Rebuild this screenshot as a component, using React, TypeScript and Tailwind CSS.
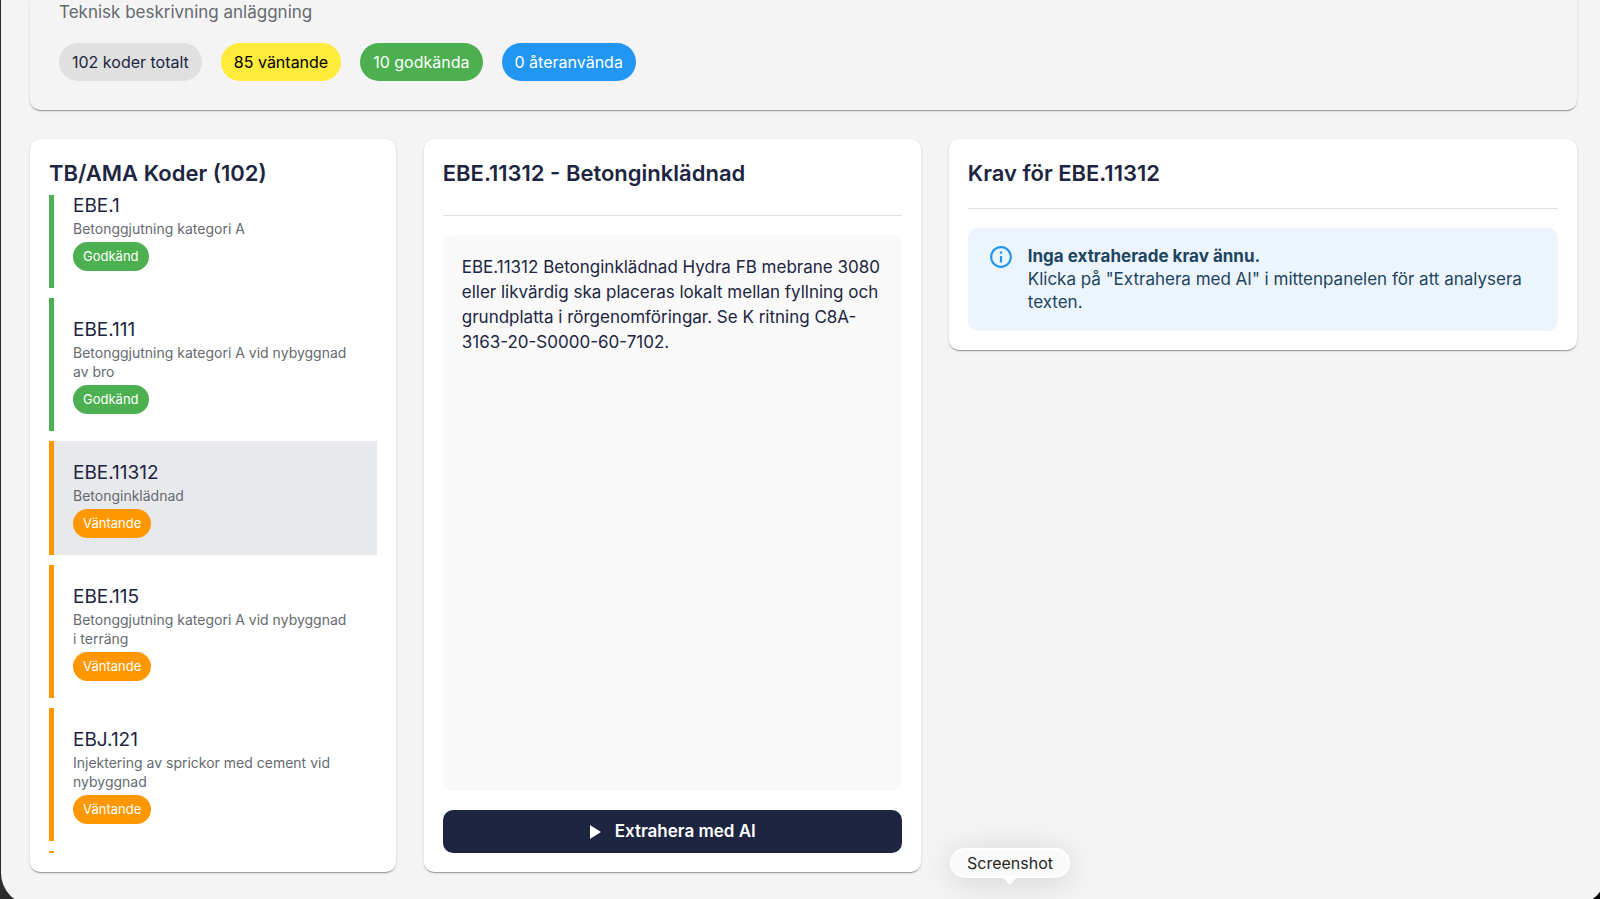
import { useLayoutEffect, useRef, useState } from 'react'
import clsx from 'clsx'

type Status = 'approved' | 'pending'

type Code = {
  id: string
  title: string
  status: Status
}

const CODES: Code[] = [
  { id: 'EBE.1', title: 'Betonggjutning kategori A', status: 'approved' },
  { id: 'EBE.111', title: 'Betonggjutning kategori A vid nybyggnad av bro', status: 'approved' },
  { id: 'EBE.11312', title: 'Betonginklädnad', status: 'pending' },
  { id: 'EBE.115', title: 'Betonggjutning kategori A vid nybyggnad i terräng', status: 'pending' },
  { id: 'EBJ.121', title: 'Injektering av sprickor med cement vid nybyggnad', status: 'pending' },
]

const STATS = [
  { label: '102 koder totalt', style: 'bg-[#e0e0e0] text-[#1d2541]' },
  { label: '85 väntande', style: 'bg-[#ffeb3b] text-black' },
  { label: '10 godkända', style: 'bg-[#4caf50] text-white' },
  { label: '0 återanvända', style: 'bg-[#2196f3] text-white' },
]

const STATUS = {
  approved: { label: 'Godkänd', border: 'border-[#4caf50]', badge: 'bg-[#4caf50]' },
  pending: { label: 'Väntande', border: 'border-[#ff9800]', badge: 'bg-[#ff9800]' },
}

const paper =
  'shadow-[0_2px_1px_-1px_rgba(0,0,0,0.2),0_1px_1px_0_rgba(0,0,0,0.14),0_1px_3px_0_rgba(0,0,0,0.12)]'

const heading = 'shrink-0 text-[22px] leading-[30px] font-semibold'

function Header() {
  return (
    <header className={clsx('rounded-b-[10px] px-[29px] pb-[29px]', paper)}>
      <p className="text-[17px] leading-[25px] text-[#666a70]">Teknisk beskrivning anläggning</p>
      <ul className="mt-[18px] flex flex-wrap gap-[19px]">
        {STATS.map((s) => (
          <li key={s.label} className={clsx('rounded-full px-[13px] text-base leading-[38px]', s.style)}>
            {s.label}
          </li>
        ))}
      </ul>
    </header>
  )
}

function CodeList({ selected, onSelect }: { selected: string; onSelect: (id: string) => void }) {
  const list = useRef<HTMLUListElement>(null)

  useLayoutEffect(() => {
    if (list.current) list.current.scrollTop = 21
  }, [])

  return (
    <section className={clsx('col-span-3 flex h-[calc(100vh-166px)] flex-col rounded-[10px] bg-white p-[19px]', paper)}>
      <h2 className={heading}>TB/AMA Koder (102)</h2>
      <ul ref={list} className="mt-[7px] flex min-h-0 flex-1 flex-col gap-[10px] overflow-y-auto [scrollbar-width:none]">
        {CODES.map((c) => (
          <li key={c.id} className="shrink-0">
            <button
              type="button"
              onClick={() => onSelect(c.id)}
              className={clsx(
                'block w-full border-l-[5px] pt-[21px] pr-7 pb-[17px] pl-[19px] text-left',
                STATUS[c.status].border,
                c.id === selected && 'bg-[#e8e9ed]'
              )}
            >
              <span className="mb-[2px] block text-[19px] leading-[22px]">{c.id}</span>
              <span className="block text-[14px] leading-[19px] text-[#666a70]">{c.title}</span>
              <span
                className={clsx(
                  'mt-1 block w-fit rounded-full px-[10px] text-[13px] leading-[29px] text-white',
                  STATUS[c.status].badge
                )}
              >
                {STATUS[c.status].label}
              </span>
            </button>
          </li>
        ))}
        <li className="h-[114px] shrink-0 border-l-[5px] border-[#ff9800]" aria-hidden="true" />
      </ul>
    </section>
  )
}

function CodeText() {
  return (
    <section className={clsx('col-span-4 flex h-[calc(100vh-166px)] flex-col rounded-[10px] bg-white p-[19px]', paper)}>
      <h2 className={heading}>EBE.11312 - Betonginklädnad</h2>
      <hr className="mt-[27px] border-[#e0e0e0]" />
      <div className="mt-[19px] flex-1 rounded-[10px] bg-[#f9f9f9] px-[19px] py-5">
        <p className="text-[17px] leading-[25px]">
          EBE.11312 Betonginklädnad Hydra FB mebrane 3080 eller likvärdig ska placeras lokalt mellan fyllning och
          grundplatta i rörgenomföringar. Se K ritning C8A-3163-20-S0000-60-7102.
        </p>
      </div>
      <button
        type="button"
        className="mt-[19px] flex h-[43px] shrink-0 items-center justify-center gap-[14px] rounded-[10px] bg-[#1d2541] text-[17px] font-semibold text-white"
      >
        <svg className="h-[14px] w-3" viewBox="0 0 12 14" fill="currentColor" aria-hidden="true">
          <path d="M1 0v14L12 7z" />
        </svg>
        Extrahera med AI
      </button>
    </section>
  )
}

function Requirements() {
  return (
    <section className={clsx('col-span-5 self-start rounded-[10px] bg-white p-[19px]', paper)}>
      <h2 className={heading}>Krav för EBE.11312</h2>
      <hr className="mt-5 border-[#e0e0e0]" />
      <div role="status" className="mt-[19px] flex gap-[15px] rounded-[10px] bg-[#ecf5fe] px-[21px] py-[17px] text-[#1d4460]">
        <svg className="size-6 shrink-0 text-[#2196f3]" viewBox="1 1 22 22" fill="currentColor" aria-hidden="true">
          <path d="M11 7h2v2h-2zm0 4h2v6h-2zm1-9C6.48 2 2 6.48 2 12s4.48 10 10 10 10-4.48 10-10S17.52 2 12 2zm0 18c-4.41 0-8-3.59-8-8s3.59-8 8-8 8 3.59 8 8-3.59 8-8 8z" />
        </svg>
        <p className="text-[17px] leading-[23px]">
          <strong className="block font-bold">Inga extraherade krav ännu.</strong>
          Klicka på "Extrahera med AI" i mittenpanelen för att analysera texten.
        </p>
      </div>
    </section>
  )
}

function DockTooltip() {
  return (
    <div
      role="tooltip"
      className="absolute bottom-[21px] left-[950px] rounded-full border-2 border-white bg-[#fafafa] px-[15px] text-base leading-[26px] text-[#262626] shadow-[0_4px_32px_rgba(0,0,0,0.14)]"
    >
      Screenshot
      <svg className="absolute top-full left-1/2 h-[9px] w-[22px] -translate-x-1/2" viewBox="0 0 22 9" fill="#fdfdfd" aria-hidden="true">
        <path d="M0 1C4 1 5 2 9 7Q11 9.500 13 7C17 2 18 1 22 1z" />
      </svg>
    </div>
  )
}

export default function App() {
  const [selected, setSelected] = useState('EBE.11312')

  return (
    <div className="relative h-screen overflow-hidden bg-linear-to-r from-[#2d2d2d] to-black font-['Inter',sans-serif] text-[#1d2541]">
      <main className="ml-px h-[calc(100vh+6px)] w-[calc(100%+5px)] rounded-b-[32px] bg-[#f4f4f4] px-[29px]">
        <Header />
        <div className="mt-[29px] grid grid-cols-12 gap-7">
          <CodeList selected={selected} onSelect={setSelected} />
          <CodeText />
          <Requirements />
        </div>
      </main>
      <DockTooltip />
    </div>
  )
}
